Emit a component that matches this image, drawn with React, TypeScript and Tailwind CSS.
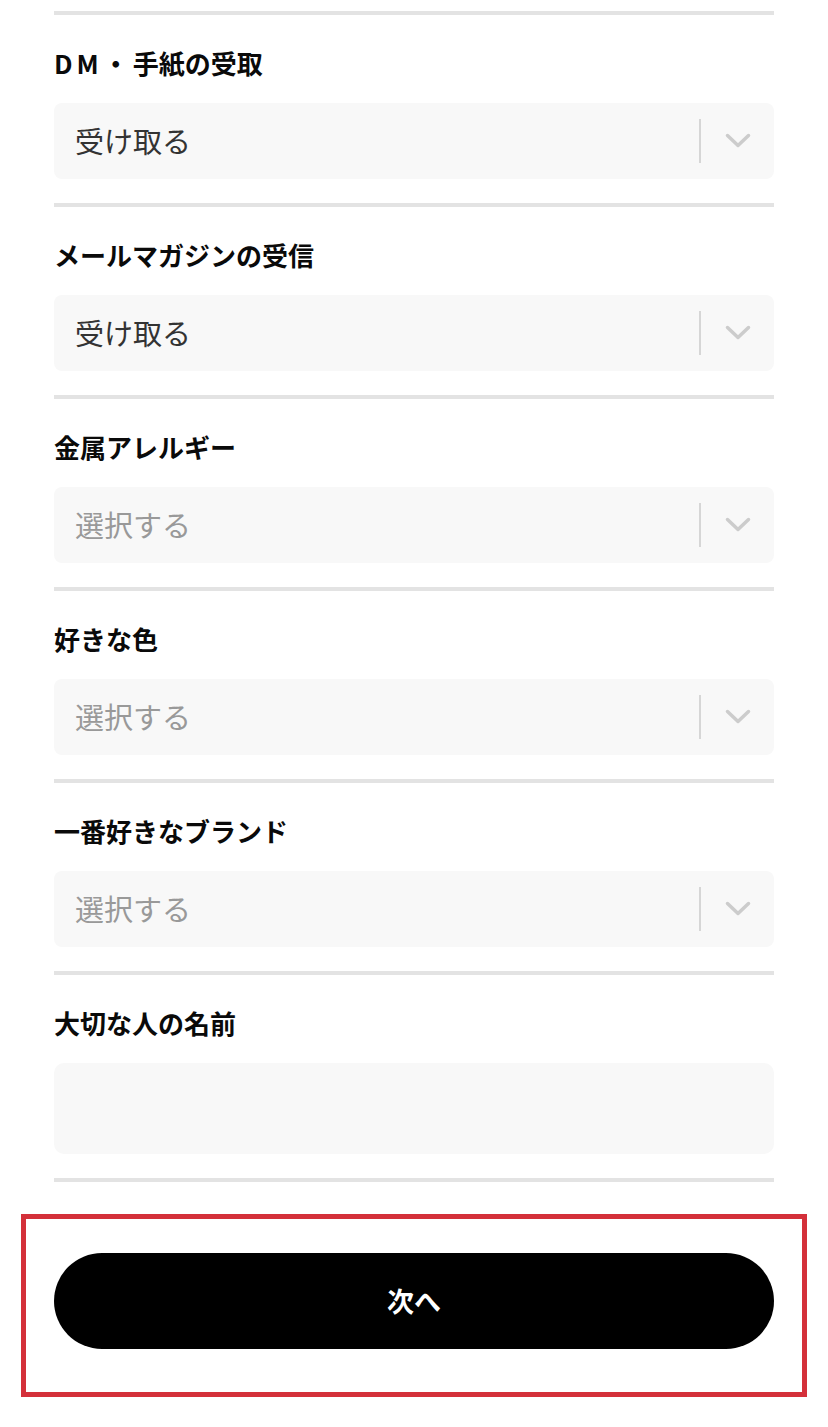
import React from "react";

const font = { fontFamily: '"Noto Sans CJK JP", "Noto Sans", sans-serif' };

function Chevron() {
  return (
    <svg width="26" height="16" viewBox="0 0 26 16" fill="none">
      <path d="M2.5 2.5 L13 12.5 L23.5 2.5" stroke="#cccccc" strokeWidth="3.5" strokeLinecap="round" strokeLinejoin="round" />
    </svg>
  );
}

function Label({ children }: { children: React.ReactNode }) {
  return (
    <div className="h-[66px] flex items-end">
      <span className="text-[26px] leading-[36px] font-bold text-[#0a0a0a]">{children}</span>
    </div>
  );
}

function SelectField({ label, value, placeholder }: { label: React.ReactNode; value?: string; placeholder?: string }) {
  return (
    <div className="flex flex-col">
      <div className="h-[4px] bg-[#e3e3e3]" />
      <Label>{label}</Label>
      <div className="mt-[22px] h-[76px] rounded-[8px] bg-[#f8f8f8] flex items-center pl-[21px]">
        <span className={`flex-1 text-[29px] ${value ? "text-[#333]" : "text-[#999]"}`}>{value ?? placeholder}</span>
        <div className="w-[2px] h-[44px] bg-[#d6d6d6]" />
        <div className="w-[73px] flex items-center justify-center">
          <Chevron />
        </div>
      </div>
      <div className="h-[24px]" />
    </div>
  );
}

export default function App() {
  return (
    <div className="min-h-[1427px] bg-white px-[54px] pt-[11px]" style={font}>
      <SelectField
        label={
          <>
            <span className="tracking-[4px]">DM・</span>手紙の受取
          </>
        }
        value="受け取る"
      />
      <SelectField label="メールマガジンの受信" value="受け取る" />
      <SelectField label="金属アレルギー" placeholder="選択する" />
      <SelectField label="好きな色" placeholder="選択する" />
      <SelectField label="一番好きなブランド" placeholder="選択する" />
      <div className="flex flex-col">
        <div className="h-[4px] bg-[#e3e3e3]" />
        <Label>大切な人の名前</Label>
        <div className="mt-[22px] h-[91px] rounded-[10px] bg-[#f8f8f8]" />
        <div className="h-[24px]" />
        <div className="h-[4px] bg-[#e3e3e3]" />
      </div>
      <div className="mt-[32px] -mx-[33px] border-[5px] border-[#d4303a] pt-[34px] pb-[43px] px-[28px]">
        <button className="w-full h-[96px] rounded-full bg-black text-white text-[27px] font-bold flex items-center justify-center">
          次へ
        </button>
      </div>
    </div>
  );
}
